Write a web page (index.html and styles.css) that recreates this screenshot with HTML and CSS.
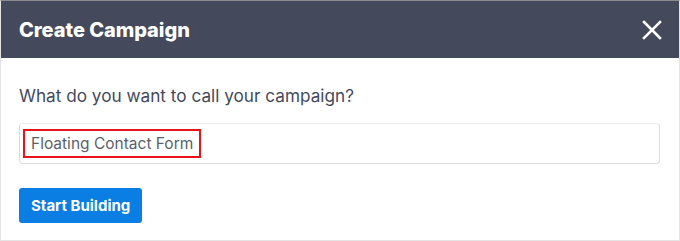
FILE: index.html
```html
<!DOCTYPE html>
<html>
<head>
<meta charset="utf-8">
<link rel="stylesheet" href="styles.css">
</head>
<body>
<div class="modal">
  <div class="modal-header">
    <h1 class="modal-title">Create Campaign</h1>
    <button class="close-btn" aria-label="Close">
      <svg width="20" height="20" viewBox="0 0 20 20"><path d="M2 2 L18 18 M18 2 L2 18" stroke="#fff" stroke-width="2.6" stroke-linecap="square" fill="none"/></svg>
    </button>
  </div>
  <div class="modal-body">
    <label class="field-label">What do you want to call your campaign?</label>
    <div class="input-box">
      <span class="highlight">Floating Contact Form</span>
    </div>
    <button class="primary-btn">Start Building</button>
  </div>
</div>
</body>
</html>
```

FILE: styles.css
```css
* { box-sizing: border-box; }
html, body { margin: 0; padding: 0; background: #fff; }
body { font-family: Inter, "Noto Sans", sans-serif; }
.modal {
  width: 680px;
  height: 241px;
  border: 1px solid #e4e4e4;
  border-top-color: #8c8c8c;
  display: flex;
  flex-direction: column;
}
.modal-header {
  height: 57px;
  background: #444a5c;
  display: flex;
  align-items: center;
  justify-content: space-between;
  padding: 0 17px 0 18px;
}
.modal-title {
  margin: 0;
  color: #fff;
  font-size: 20px;
  font-weight: 800;
  letter-spacing: -0.05px;
}
.close-btn {
  background: none;
  border: 0;
  padding: 0;
  width: 20px;
  height: 20px;
  display: flex;
}
.modal-body {
  padding: 26px 19px 0 18px;
  display: flex;
  flex-direction: column;
  align-items: flex-start;
}
.field-label {
  font-size: 17.2px;
  line-height: 24px;
  color: #444a5c;
}
.input-box {
  margin-top: 15px;
  width: 641px;
  height: 41px;
  border: 1px solid #dcdcde;
  border-top-color: #ececec;
  border-radius: 4px;
  padding: 5px 3px;
}
.highlight {
  display: inline-block;
  height: 29px;
  border: 2px solid #e8141a;
  padding: 0 6px 0 6px;
  font-size: 15.5px;
  line-height: 25px;
  color: #5a5f6b;
}
.primary-btn {
  margin-top: 24px;
  height: 35px;
  padding: 0 12px;
  background: #0a7ee3;
  color: #fff;
  border: 0;
  border-radius: 3px;
  font-family: Inter, "Noto Sans", sans-serif;
  font-size: 15px;
  font-weight: 700;
}
```
